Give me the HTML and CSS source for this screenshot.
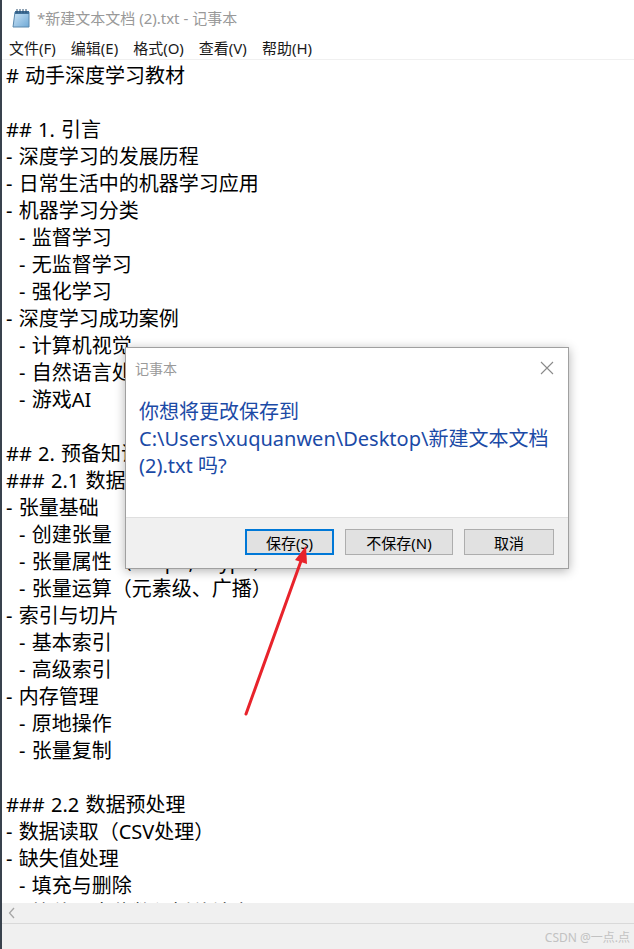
FILE: index.html
```html
<!DOCTYPE html>
<html lang="zh-CN">

<head>
    <meta charset="UTF-8">
    <meta name="viewport" content="width=device-width, initial-scale=1.0">
    <title>*新建文本文档 (2).txt - 记事本</title>
    <link rel="stylesheet" href="styles.css">
</head>

<body>
    <div class="window">
        <div class="titlebar">
            <svg class="app-icon" width="19" height="20" viewBox="0 0 19 20">
                <defs>
                    <linearGradient id="pad" x1="0" y1="0" x2="1" y2="1">
                        <stop offset="0" stop-color="#cfe6f7" />
                        <stop offset="1" stop-color="#6fa9d6" />
                    </linearGradient>
                </defs>
                <path d="M3 4 H17 V19 H1 Z" fill="url(#pad)" stroke="#5a88ad" stroke-width="1" />
                <rect x="3" y="3" width="14" height="3" fill="#3f6f98" />
                <g stroke="#2b4f70" stroke-width="1">
                    <line x1="5" y1="1" x2="5" y2="5" />
                    <line x1="8" y1="1" x2="8" y2="5" />
                    <line x1="11" y1="1" x2="11" y2="5" />
                    <line x1="14" y1="1" x2="14" y2="5" />
                </g>
            </svg>
            <span class="title">*新建文本文档 (2).txt - 记事本</span>
        </div>

        <div class="menubar">
            <span>文件(F)</span>
            <span>编辑(E)</span>
            <span>格式(O)</span>
            <span>查看(V)</span>
            <span>帮助(H)</span>
        </div>

        <div class="editor">
            <div class="line"># 动手深度学习教材</div>
            <div class="line"></div>
            <div class="line">## 1. 引言</div>
            <div class="line">- 深度学习的发展历程</div>
            <div class="line">- 日常生活中的机器学习应用</div>
            <div class="line">- 机器学习分类</div>
            <div class="line sub">- 监督学习</div>
            <div class="line sub">- 无监督学习</div>
            <div class="line sub">- 强化学习</div>
            <div class="line">- 深度学习成功案例</div>
            <div class="line sub">- 计算机视觉</div>
            <div class="line sub">- 自然语言处理</div>
            <div class="line sub">- 游戏AI</div>
            <div class="line"></div>
            <div class="line">## 2. 预备知识</div>
            <div class="line">### 2.1 数据操作</div>
            <div class="line">- 张量基础</div>
            <div class="line sub">- 创建张量（zeros、ones、randn）</div>
            <div class="line sub">- 张量属性（shape, dtype）</div>
            <div class="line sub">- 张量运算（元素级、广播）</div>
            <div class="line">- 索引与切片</div>
            <div class="line sub">- 基本索引</div>
            <div class="line sub">- 高级索引</div>
            <div class="line">- 内存管理</div>
            <div class="line sub">- 原地操作</div>
            <div class="line sub">- 张量复制</div>
            <div class="line"></div>
            <div class="line">### 2.2 数据预处理</div>
            <div class="line">- 数据读取（CSV处理）</div>
            <div class="line">- 缺失值处理</div>
            <div class="line sub">- 填充与删除</div>
            <div class="line sub">- 均值、中位数与插值填充</div>
        </div>

        <div class="hscroll">
            <svg width="8" height="12" viewBox="0 0 8 12">
                <polyline points="6,1 1.5,6 6,11" fill="none" stroke="#a6a6a6" stroke-width="1.3" />
            </svg>
        </div>

        <div class="statusbar">
            <span class="watermark">CSDN @一点.点</span>
        </div>

        <div class="dialog">
            <div class="dialog-title">
                <span>记事本</span>
                <svg width="14" height="14" viewBox="0 0 14 14">
                    <path d="M1 1 L13 13 M13 1 L1 13" stroke="#8a8a8a" stroke-width="1.1" />
                </svg>
            </div>
            <div class="dialog-body">
                <p>你想将更改保存到</p>
                <p>C:\Users\xuquanwen\Desktop\新建文本文档</p>
                <p>(2).txt 吗?</p>
            </div>
            <div class="dialog-footer">
                <button class="btn btn-default">保存(S)</button>
                <button class="btn btn-wide">不保存(N)</button>
                <button class="btn">取消</button>
            </div>
        </div>

        <svg class="arrow" width="634" height="949" viewBox="0 0 634 949">
            <line x1="246" y1="714" x2="301" y2="561" stroke="#e8232b" stroke-width="3" stroke-linecap="round" />
            <polygon points="306,546 295,560 307,564" fill="#e8232b" />
        </svg>
    </div>
</body>

</html>
```

FILE: styles.css
```css
* {
    margin: 0;
    padding: 0;
    box-sizing: border-box;
}

body {
    width: 634px;
    height: 949px;
    overflow: hidden;
    font-family: "Noto Sans", "Noto Sans CJK SC", sans-serif;
    background: #ffffff;
    color: #000000;
}

.window {
    position: relative;
    height: 949px;
    display: flex;
    flex-direction: column;
    border-left: 2px solid #39424d;
}

.titlebar {
    height: 35px;
    display: flex;
    align-items: center;
    gap: 6px;
    padding-left: 10px;
    background: #ffffff;
}

.app-icon {
    flex-shrink: 0;
}

.title {
    font-size: 15px;
    color: #999999;
}

.menubar {
    height: 25px;
    display: flex;
    align-items: center;
    gap: 15px;
    padding-left: 7px;
    font-size: 15px;
    color: #1a1a1a;
    border-bottom: 1px solid #f0f0f0;
}

.editor {
    flex: 1;
    overflow: hidden;
    padding: 2px 0 0 4px;
    font-size: 20px;
    word-spacing: 1px;
}

.line {
    height: 27px;
    line-height: 27px;
    white-space: pre;
}

.line.sub {
    padding-left: 13px;
}

.hscroll {
    height: 20px;
    background: #f0f0f0;
    display: flex;
    align-items: center;
    padding-left: 6px;
}

.statusbar {
    height: 26px;
    background: #f0f0f0;
    border-top: 1px solid #d9d9d9;
    display: flex;
    align-items: center;
    justify-content: flex-end;
    padding-right: 4px;
}

.watermark {
    font-size: 12px;
    color: #c2c2c2;
}

/* save prompt */

.dialog {
    position: absolute;
    left: 123px;
    top: 347px;
    width: 444px;
    height: 222px;
    background: #ffffff;
    border: 1px solid #a0a0a0;
    box-shadow: 0 2px 10px rgba(0, 0, 0, 0.3);
    display: flex;
    flex-direction: column;
}

.dialog-title {
    height: 40px;
    display: flex;
    align-items: center;
    justify-content: space-between;
    padding: 0 14px 0 9px;
    font-size: 14px;
    color: #9a9a9a;
}

.dialog-body {
    flex: 1;
    padding: 10px 0 0 13px;
    font-size: 20px;
    line-height: 27px;
    color: #1b4aa6;
}

.dialog-footer {
    height: 51px;
    background: #f0f0f0;
    border-top: 1px solid #dfdfdf;
    display: flex;
    justify-content: flex-end;
    align-items: flex-start;
    gap: 11px;
    padding: 11px 14px 0 0;
}

.btn {
    width: 90px;
    height: 26px;
    font-family: "Noto Sans", "Noto Sans CJK SC", sans-serif;
    font-size: 15px;
    color: #000000;
    background: #e1e1e1;
    border: 1px solid #adadad;
}

.btn-default {
    width: 89px;
    border: 2px solid #0078d7;
}

.btn-wide {
    width: 108px;
}

.arrow {
    position: absolute;
    left: -2px;
    top: 0;
    pointer-events: none;
}
```
